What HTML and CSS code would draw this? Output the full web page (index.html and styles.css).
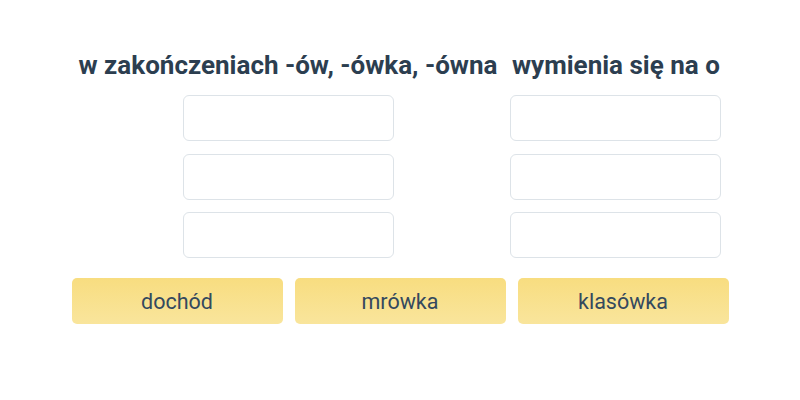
FILE: index.html
```html
<!DOCTYPE html>
<html lang="pl">
<head>
    <meta charset="UTF-8">
    <meta name="viewport" content="width=device-width, initial-scale=1.0">
    <title>Wymiana ó na o</title>
    <link rel="stylesheet" href="styles.css">
</head>
<body>
    <div class="exercise">
        <div class="columns">
            <div class="column">
                <h2>w zakończeniach -ów, -ówka, -ówna</h2>
                <div class="drop-box"></div>
                <div class="drop-box"></div>
                <div class="drop-box"></div>
            </div>
            <div class="column">
                <h2>wymienia się na o</h2>
                <div class="drop-box"></div>
                <div class="drop-box"></div>
                <div class="drop-box"></div>
            </div>
        </div>
        <div class="words">
            <div class="word">dochód</div>
            <div class="word">mrówka</div>
            <div class="word">klasówka</div>
        </div>
    </div>
</body>
</html>
```

FILE: styles.css
```css
body {
    margin: 0;
    padding: 0;
    background: #fff;
    font-family: Roboto, "Liberation Sans", sans-serif;
    color: #2c3e50;
}
.exercise {
    padding-top: 50px;
}
.columns {
    display: flex;
    justify-content: center;
    gap: 13px;
}
.column {
    display: flex;
    flex-direction: column;
    align-items: center;
    gap: 12.5px;
}
.column h2 {
    margin: 0 0 2.5px;
    font-size: 26px;
    font-weight: 700;
    line-height: 30px;
    white-space: nowrap;
}
.drop-box {
    width: 209px;
    height: 44px;
    border: 1px solid #dde3e8;
    border-radius: 6px;
    background: #fff;
}
.words {
    display: flex;
    justify-content: center;
    gap: 12px;
    margin-top: 20px;
}
.word {
    width: 211px;
    height: 46px;
    display: flex;
    align-items: center;
    justify-content: center;
    border-radius: 5px;
    background: linear-gradient(#f8dd80, #f9e59c);
    font-size: 21.5px;
    color: #34495e;
}
```
